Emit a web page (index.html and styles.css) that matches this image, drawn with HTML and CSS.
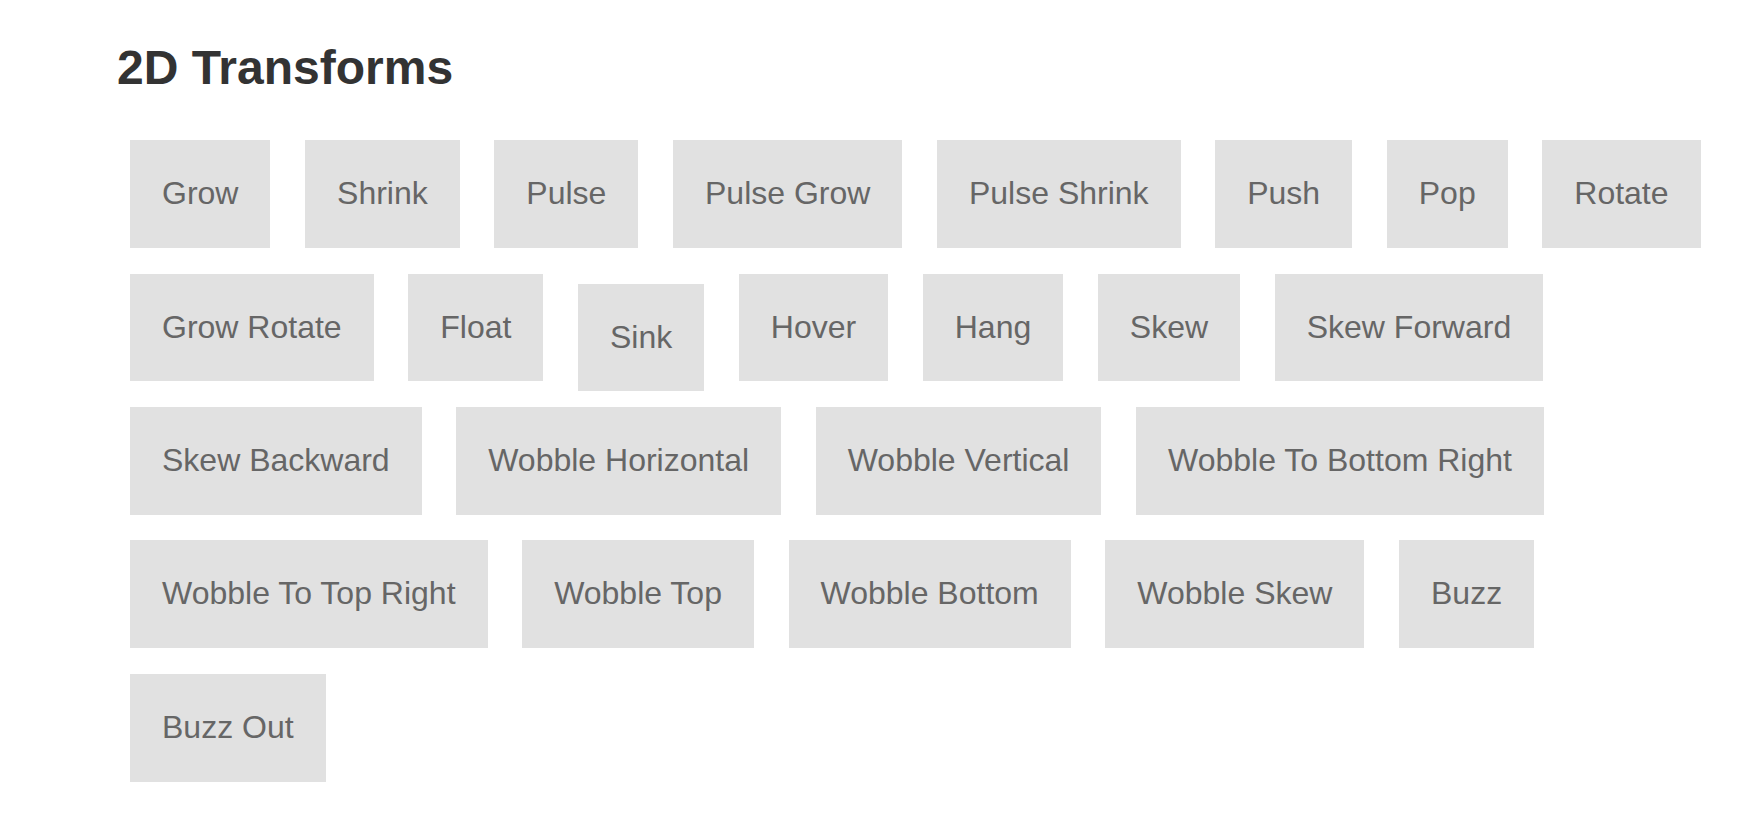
FILE: index.html
```html
<!DOCTYPE html>
<html lang="en">
<head>
<meta charset="utf-8">
<title>2D Transforms</title>
<link rel="stylesheet" href="styles.css">
</head>
<body>
<div class="page">
  <h2 class="section-title">2D Transforms</h2>
  <div class="buttons">
    <a class="button">Grow</a>
    <a class="button">Shrink</a>
    <a class="button">Pulse</a>
    <a class="button">Pulse Grow</a>
    <a class="button">Pulse Shrink</a>
    <a class="button">Push</a>
    <a class="button">Pop</a>
    <a class="button">Rotate</a>
    <a class="button">Grow Rotate</a>
    <a class="button">Float</a>
    <a class="button button-sink">Sink</a>
    <a class="button">Hover</a>
    <a class="button">Hang</a>
    <a class="button">Skew</a>
    <a class="button">Skew Forward</a>
    <a class="button">Skew Backward</a>
    <a class="button">Wobble Horizontal</a>
    <a class="button">Wobble Vertical</a>
    <a class="button">Wobble To Bottom Right</a>
    <a class="button">Wobble To Top Right</a>
    <a class="button">Wobble Top</a>
    <a class="button">Wobble Bottom</a>
    <a class="button">Wobble Skew</a>
    <a class="button">Buzz</a>
    <a class="button">Buzz Out</a>
  </div>
</div>
</body>
</html>
```

FILE: styles.css
```css
html, body {
  margin: 0;
  padding: 0;
  background: #ffffff;
}

body {
  font-family: "Liberation Sans", Arial, Helvetica, sans-serif;
  font-size: 32px;
  line-height: 1.4;
  color: #333333;
}

.page {
  padding: 34px 0 0 117px;
}

.section-title {
  margin: 0;
  font-size: 48px;
  font-weight: bold;
  line-height: 1.4;
  color: #333333;
}

.buttons {
  display: flex;
  flex-wrap: wrap;
  align-items: flex-start;
  column-gap: 34.6px;
  row-gap: 25.6px;
  margin: 39px 0 0 13px;
  max-width: 1600px;
}

.button {
  display: block;
  padding: 31px 32px 32px;
  background: #e1e1e1;
  color: #666666;
  text-decoration: none;
  white-space: nowrap;
  cursor: pointer;
}

.button-sink {
  transform: translateY(10px);
}
```
